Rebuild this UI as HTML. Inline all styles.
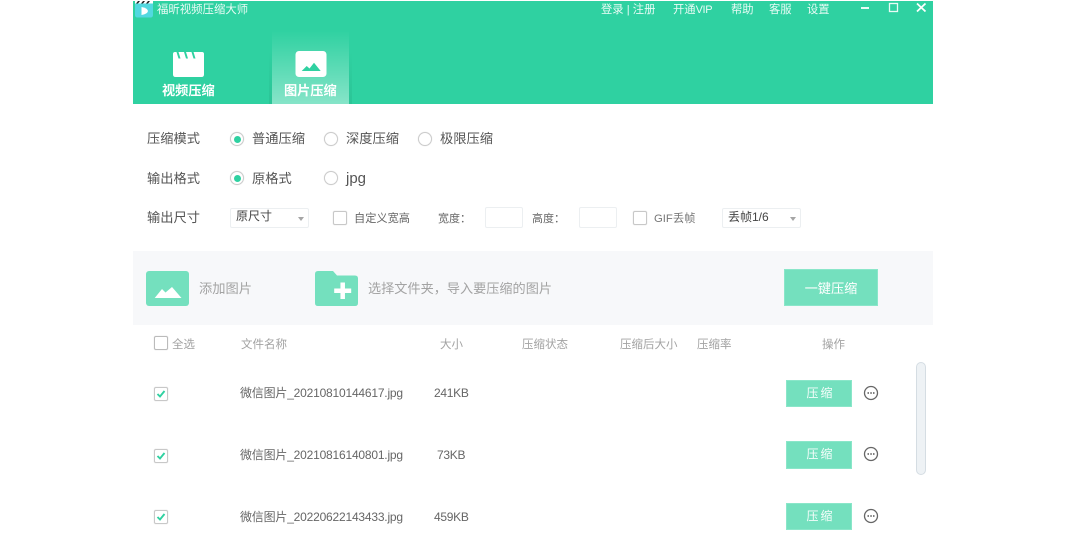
<!DOCTYPE html>
<html><head><meta charset="utf-8">
<style>
html,body{margin:0;padding:0;background:#fff;width:1066px;height:533px;overflow:hidden}
body{font-family:"Liberation Sans","Noto Sans CJK SC",sans-serif;position:relative}
.t{position:absolute;white-space:nowrap;line-height:16px;font-size:13px;color:#666}
.w{color:#e8fbf5;font-size:11.3px}
.l{color:#555;font-size:13.25px}
.h{color:#a3a3a3;font-size:11.5px}
.f{font-size:12px;letter-spacing:-.2px}
.s{font-size:12px;letter-spacing:-.3px}
.r{position:absolute;width:12px;height:12px;border:1px solid #ccc;border-radius:50%;background:#fff;box-shadow:0 0 1px #ddd}
.r.on:after{content:"";position:absolute;left:2.500px;top:2.500px;width:7px;height:7px;border-radius:50%;background:#2fd1a1}
.c{position:absolute;width:12px;height:12px;border:1px solid #c8c8c8;border-radius:2px;background:#fff;box-shadow:0 0 1px #ccc}
.box{position:absolute;border:1px solid #eceff1;border-radius:2px;background:#fff;box-sizing:border-box}
.arr{position:absolute;width:0;height:0;border-left:3px solid transparent;border-right:3px solid transparent;border-top:4px solid #a5a5a5}
.btn{position:absolute;left:786px;width:66px;height:27px;background:#74e0be;color:#f4fdfa;font-size:12px;line-height:25px;text-align:center;letter-spacing:2px;padding-left:3px;box-sizing:border-box;border:1px solid #8ae6c9}
svg{position:absolute;display:block}
</style></head><body>
<div style="position:absolute;left:133px;top:1px;width:800px;height:103px;background:#2fd1a1"></div>
<div style="position:absolute;left:272px;top:30px;width:77px;height:74px;background:linear-gradient(180deg,rgba(255,255,255,0) 0%,rgba(255,255,255,.1) 25%,rgba(255,255,255,.42) 100%)"></div>
<div style="position:absolute;left:269px;top:30px;width:3px;height:74px;background:linear-gradient(180deg,rgba(30,160,120,0) 30%,rgba(30,160,120,.25) 100%)"></div>
<div style="position:absolute;left:349px;top:30px;width:3px;height:74px;background:linear-gradient(180deg,rgba(30,160,120,0) 30%,rgba(30,160,120,.25) 100%)"></div>

<svg style="left:134px;top:0" width="20" height="18" viewBox="0 0 20 18"><path d="M1 3.500H19V15Q19 17.500 16.500 17.500H3.500Q1 17.500 1 15Z" fill="#52d8e0"/><path d="M7.500 7L7.500 15Q13.500 14 14 11Q13.500 8 7.500 7Z" fill="#fff"/><rect x="1" y="1" width="18" height="2.500" fill="#fff"/><path d="M2 3.500L4 1H6L4 3.500ZM7 3.500L9 1H11L9 3.500ZM12 3.500L14 1H16L14 3.500Z" fill="#222"/></svg>
<div class="t w" style="left:157px;top:2px;font-size:11.4px">福昕视频压缩大师</div>

<div class="t w" style="left:601px;top:2px">登录 | 注册</div>
<div class="t w" style="left:673px;top:2px">开通<span style="font-size:11px;letter-spacing:-.4px">VIP</span></div>
<div class="t w" style="left:731px;top:2px">帮助</div>
<div class="t w" style="left:769px;top:2px">客服</div>
<div class="t w" style="left:807px;top:2px">设置</div>
<svg style="left:860px;top:2px" width="70" height="12" viewBox="0 0 70 12"><path d="M1 6H9" stroke="#e8fbf5" stroke-width="2"/><rect x="29.500" y="1.500" width="8" height="8" fill="none" stroke="#e8fbf5" stroke-width="1.300"/><path d="M57 1.500L65.500 9.500M65.500 1.500L57 9.500" stroke="#fff" stroke-width="1.800"/></svg>

<svg style="left:173px;top:52px" width="31" height="26" viewBox="0 0 31 26"><path d="M0 2Q0 0 2 0H3.500L5.500 6.500H7.500L5.500 0H11L13 6.500H15L13 0H18.500L20.500 6.500H22.500L20.500 0H29Q31 0 31 2V22.500Q31 25 28.500 25H2.500Q0 25 0 22.500Z" fill="#fff"/></svg>
<div class="t" style="left:162px;top:83px;color:#fff;font-size:13.2px;font-weight:bold">视频压缩</div>
<svg style="left:295px;top:51px" width="32" height="26" viewBox="0 0 32 26"><rect x=".500" width="31" height="26" rx="3.500" fill="#fff"/><path d="M6.700 20L11.700 15L14.500 17.500L19 11.700L25.700 20Z" fill="#2fd1a1"/></svg>
<div class="t" style="left:284px;top:83px;color:#fff;font-size:13.2px;font-weight:bold">图片压缩</div>

<div class="t l" style="left:147px;top:131px">压缩模式</div>
<div class="r on" style="left:230px;top:132px"></div><div class="t l" style="left:252px;top:131px">普通压缩</div>
<div class="r" style="left:324px;top:132px"></div><div class="t l" style="left:346px;top:131px">深度压缩</div>
<div class="r" style="left:418px;top:132px"></div><div class="t l" style="left:440px;top:131px">极限压缩</div>

<div class="t l" style="left:147px;top:171px">输出格式</div>
<div class="r on" style="left:230px;top:171px"></div><div class="t l" style="left:252px;top:171px">原格式</div>
<div class="r" style="left:324px;top:171px"></div><div class="t l" style="left:346px;top:171px;font-size:15px">jpg</div>

<div class="t l" style="left:147px;top:210px">输出尺寸</div>
<div class="box" style="left:230px;top:208px;width:79px;height:20px"></div>
<div class="t" style="left:236px;top:208px;font-size:12px;color:#444">原尺寸</div>
<div class="arr" style="left:298px;top:217px"></div>
<div class="c" style="left:333px;top:211px"></div>
<div class="t" style="left:354px;top:211px;font-size:11.2px;color:#666">自定义宽高</div>
<div class="t" style="left:438px;top:211px;font-size:11px;color:#666">宽度：</div>
<div class="box" style="left:485px;top:207px;width:38px;height:21px"></div>
<div class="t" style="left:532px;top:211px;font-size:11px;color:#666">高度：</div>
<div class="box" style="left:579px;top:207px;width:38px;height:21px"></div>
<div class="c" style="left:633px;top:211px"></div>
<div class="t" style="left:654px;top:211px;font-size:11.3px;color:#777">GIF丢帧</div>
<div class="box" style="left:722px;top:208px;width:79px;height:20px"></div>
<div class="t" style="left:728px;top:209px;font-size:12px;color:#444">丢帧1/6</div>
<div class="arr" style="left:790px;top:217px"></div>

<div style="position:absolute;left:133px;top:251px;width:800px;height:74px;background:#f7f8fa"></div>
<svg style="left:146px;top:271px" width="43" height="35" viewBox="0 0 43 35"><rect width="43" height="35" rx="3" fill="#74e0be"/><path d="M8.700 27L16 18L19.500 21.500L26 16L35.500 27Z" fill="#fff"/></svg>
<div class="t h" style="left:199px;top:281px;font-size:13.25px">添加图片</div>
<svg style="left:315px;top:271px" width="43" height="35" viewBox="0 0 43 35"><path d="M0 3Q0 0 3 0H18L22 4.500H40Q43 4.500 43 7.500V32Q43 35 40 35H3Q0 35 0 32Z" fill="#74e0be"/><path d="M27.700 11.500V28M19.200 19.700H36.200" stroke="#fff" stroke-width="4.500"/></svg>
<div class="t h" style="left:368px;top:281px;font-size:13.15px">选择文件夹，导入要压缩的图片</div>
<div style="position:absolute;left:784px;top:269px;width:94px;height:37px;background:#74e0be;box-sizing:border-box;border:1px solid #8ae6c9;color:#fff;font-size:13.2px;line-height:37px;text-align:center">一键压缩</div>

<div class="c" style="left:154px;top:336px;border-color:#bbb"></div>
<div class="t h" style="left:172px;top:337px">全选</div>
<div class="t h" style="left:241px;top:337px">文件名称</div>
<div class="t h" style="left:440px;top:337px">大小</div>
<div class="t h" style="left:522px;top:337px">压缩状态</div>
<div class="t h" style="left:620px;top:337px">压缩后大小</div>
<div class="t h" style="left:697px;top:337px">压缩率</div>
<div class="t h" style="left:822px;top:337px">操作</div>

<div style="position:absolute;left:916px;top:362px;width:10px;height:113px;box-sizing:border-box;background:#eef2f5;border:1px solid #d5dde3;border-radius:5px"></div>

<div class="c" style="left:154px;top:387px"></div>
<svg style="left:155px;top:388px" width="12" height="12" viewBox="0 0 12 12"><path d="M2.500 6L5 8.500L9.500 3" fill="none" stroke="#2fd1a1" stroke-width="1.900"/></svg>
<div class="t f" style="left:240px;top:385px">微信图片_20210810144617.jpg</div>
<div class="t s" style="left:434px;top:385px">241KB</div>
<div class="btn" style="top:380px">压缩</div>
<svg style="left:863px;top:385px" width="16" height="16" viewBox="0 0 16 16"><circle cx="8" cy="8" r="6.500" fill="none" stroke="#666" stroke-width="1.300"/><path d="M4.500 8H6M7.300 8H8.800M10 8H11.500" stroke="#555" stroke-width="1.600"/></svg>

<div class="c" style="left:154px;top:449px"></div>
<svg style="left:155px;top:450px" width="12" height="12" viewBox="0 0 12 12"><path d="M2.500 6L5 8.500L9.500 3" fill="none" stroke="#2fd1a1" stroke-width="1.900"/></svg>
<div class="t f" style="left:240px;top:447px">微信图片_20210816140801.jpg</div>
<div class="t s" style="left:437px;top:447px">73KB</div>
<div class="btn" style="top:441px;height:28px;line-height:25px">压缩</div>
<svg style="left:863px;top:446px" width="16" height="16" viewBox="0 0 16 16"><circle cx="8" cy="8" r="6.500" fill="none" stroke="#666" stroke-width="1.300"/><path d="M4.500 8H6M7.300 8H8.800M10 8H11.500" stroke="#555" stroke-width="1.600"/></svg>

<div class="c" style="left:154px;top:510px"></div>
<svg style="left:155px;top:511px" width="12" height="12" viewBox="0 0 12 12"><path d="M2.500 6L5 8.500L9.500 3" fill="none" stroke="#2fd1a1" stroke-width="1.900"/></svg>
<div class="t f" style="left:240px;top:509px">微信图片_20220622143433.jpg</div>
<div class="t s" style="left:434px;top:509px">459KB</div>
<div class="btn" style="top:503px">压缩</div>
<svg style="left:863px;top:508px" width="16" height="16" viewBox="0 0 16 16"><circle cx="8" cy="8" r="6.500" fill="none" stroke="#666" stroke-width="1.300"/><path d="M4.500 8H6M7.300 8H8.800M10 8H11.500" stroke="#555" stroke-width="1.600"/></svg>
</body></html>
